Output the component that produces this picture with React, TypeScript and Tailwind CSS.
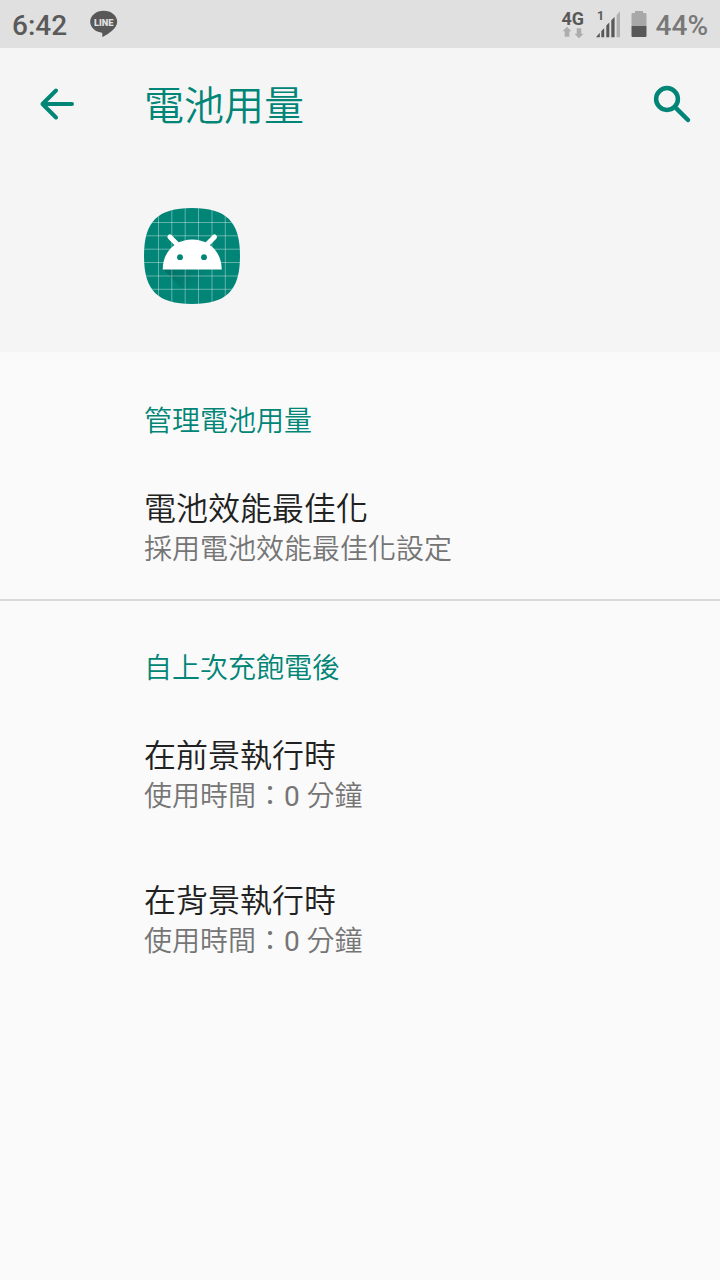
interface UsageItem {
  title: string;
  summary?: string;
  minutes?: number;
}

const manageItems: UsageItem[] = [
  { title: '電池效能最佳化', summary: '採用電池效能最佳化設定' },
];

const usageItems: UsageItem[] = [
  { title: '在前景執行時', minutes: 0 },
  { title: '在背景執行時', minutes: 0 },
];

const GRID = [14.5, 27.8, 41.2, 54.5, 68, 81.3];

function LineIcon() {
  return (
    <svg width="28" height="28" viewBox="0 0 28 28">
      <path
        d="M13.700 .8C6.200 .8.200 5.700.200 11.800c0 5.400 4.700 9.900 11 10.800.8.200 1.200.6 1.200 1.300l-.2 2.400c0 .5.400.7.900.4C18.200 24 27.200 18.500 27.200 11.800 27.200 5.700 21.200.8 13.700 .8z"
        fill="#585858"
      />
      <text x="13.700" y="15.800" textAnchor="middle" textLength="19.500" lengthAdjust="spacingAndGlyphs" fontSize="9.500" fontWeight="900" fill="#e0e0e0">
        LINE
      </text>
    </svg>
  );
}

function NetworkIcon() {
  return (
    <svg width="26" height="30" viewBox="0 0 26 30" overflow="visible">
      <text x="1.500" y="15.600" textLength="22.500" lengthAdjust="spacingAndGlyphs" fontSize="18" fontWeight="700" fill="#585858">
        4G
      </text>
      <path d="M7 17.800 11.500 22.300H9.300v5.500H4.700v-5.500H2.500z" fill="#adadad" />
      <path d="M19 29.200 14.500 24.700h2.200V19.200h4.600v5.500H23.500z" fill="#adadad" />
    </svg>
  );
}

function SignalIcon() {
  return (
    <svg width="26" height="28" viewBox="0 0 26 28" overflow="visible">
      <text x="1" y="10" fontSize="12.500" fontWeight="700" fill="#585858">
        1
      </text>
      <g fill="#585858">
        <path d="M0 27.200l3.800-4.400v4.400z" />
        <path d="M5.300 21.200l2.900-3.300v9.300H5.300z" />
        <path d="M10.300 15.600l3-3.200v14.800h-3z" />
        <path d="M15.300 10.300l3.300-3.400v20.300h-3.300z" />
      </g>
      <path d="M20.600 5.100 24 1.300v25.900h-3.400z" fill="#b0b0b0" />
    </svg>
  );
}

function BatteryIcon() {
  return (
    <svg width="16" height="28" viewBox="0 0 16 28">
      <path d="M4 1h8v2h2.500q1 0 1 1v12H.5V4q0-1 1-1H4z" fill="#a8a8a8" />
      <path d="M.5 16h15v10q0 1-1 1h-13q-1 0-1-1z" fill="#585858" />
    </svg>
  );
}

function StatusBar() {
  return (
    <div className="flex h-12 items-center justify-between bg-[#e0e0e0] px-3 text-[28px] font-medium leading-none text-[#5a5a5a]">
      <div className="flex items-center">
        <span className="w-[78px] pt-[3px]">6:42</span>
        <LineIcon />
      </div>
      <div className="flex items-center">
        <NetworkIcon />
        <span className="ml-[10px] flex"><SignalIcon /></span>
        <span className="ml-[9px] flex"><BatteryIcon /></span>
        <span className="ml-[9px] pt-[3px] text-[#787878]">44%</span>
      </div>
    </div>
  );
}

function LauncherIcon() {
  return (
    <svg width="96" height="96" viewBox="0 0 96 96">
      <defs>
        <clipPath id="mask">
          <path d="M48 0C82.500 0 96 13.500 96 48S82.500 96 48 96 0 82.500 0 48 13.500 0 48 0z" />
        </clipPath>
        <linearGradient id="shadow" x1="20" y1="60" x2="55" y2="96" gradientUnits="userSpaceOnUse">
          <stop offset="0" stopColor="#000" stopOpacity=".16" />
          <stop offset=".7" stopColor="#000" stopOpacity="0" />
        </linearGradient>
      </defs>
      <g clipPath="url(#mask)">
        <rect width="96" height="96" fill="#008577" />
        {GRID.map((p) => (
          <path key={p} d={`M${p} 0V96M0 ${p}H96`} stroke="#fff" strokeOpacity=".38" strokeWidth="1" />
        ))}
        <path d="M19 61h58.500L96 80v16H53z" fill="url(#shadow)" />
      </g>
      <path d="M18.700 61.500C18.700 44 31 31.400 48.200 31.400S77.700 44 77.700 61.500z" fill="#fff" />
      <path d="M25.900 29l9 9M70.500 29l-9 9" stroke="#fff" strokeWidth="5" strokeLinecap="round" />
      <circle cx="36" cy="49.200" r="2.900" fill="#008577" />
      <circle cx="60" cy="49.200" r="2.900" fill="#008577" />
    </svg>
  );
}

function Item({ title, summary, minutes }: UsageItem) {
  return (
    <div className="h-[145px] pt-8">
      <div className="h-[43px] text-[32px] leading-[43px] text-[#212121]">{title}</div>
      <div className="h-[38px] text-[28px] leading-[38px] text-[#757575]">
        {summary ?? (
          <>
            使用時間：<span className="font-normal">{minutes}</span> 分鐘
          </>
        )}
      </div>
    </div>
  );
}

function Section({ heading, items }: { heading: string; items: UsageItem[] }) {
  return (
    <section className="pl-36 pt-12">
      <h2 className="h-[54px] text-[28px] leading-[40px] text-[#008577]">{heading}</h2>
      {items.map((item) => (
        <Item key={item.title} {...item} />
      ))}
    </section>
  );
}

export default function App() {
  return (
    <div className="min-h-screen w-[720px] bg-[#fafafa] font-['Roboto','Noto_Sans_CJK_TC',sans-serif] font-[350]">
      <StatusBar />
      <header className="h-[304px] bg-[#f5f5f5]">
        <div className="flex h-28 items-center pl-[38px] pr-7 text-[#008577]">
          <svg width="38" height="38" viewBox="0 0 38 38" fill="none" stroke="currentColor" strokeWidth="4" strokeLinecap="round" strokeLinejoin="round">
            <path d="M34 19H4.500M18 5.500 4.500 19 18 32.500" />
          </svg>
          <h1 className="ml-[68px] flex-1 pt-1.5 text-[40px] font-[350] leading-[56px]">電池用量</h1>
          <svg width="40" height="40" viewBox="0 0 40 40" fill="none" stroke="currentColor" strokeWidth="4.500">
            <circle cx="15" cy="15" r="10.900" />
            <path d="M24.800 24.800 36 36" strokeLinecap="round" />
          </svg>
        </div>
        <div className="pl-36 pt-12">
          <LauncherIcon />
        </div>
      </header>
      <main>
        <div className="h-[247px] pt-0.5">
          <Section heading="管理電池用量" items={manageItems} />
        </div>
        <hr className="border-t-2 border-[#dadada]" />
        <Section heading="自上次充飽電後" items={usageItems} />
      </main>
    </div>
  );
}
